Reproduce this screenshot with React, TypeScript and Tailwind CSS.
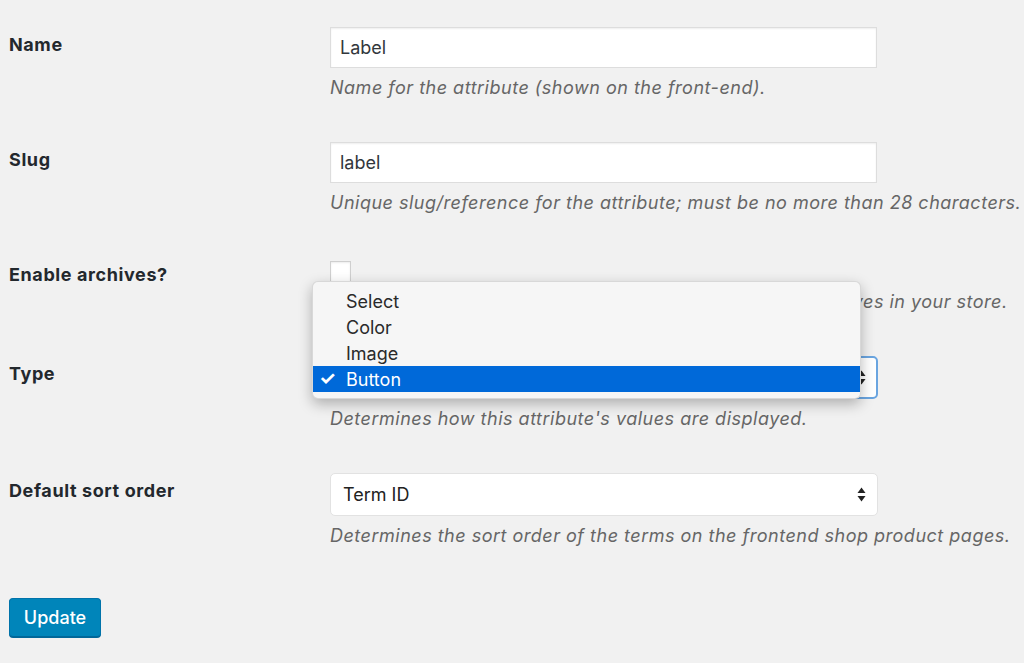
import type { ReactNode } from 'react'

const font = { fontFamily: 'Inter, "Liberation Sans", Arial, sans-serif' }

function Arrows() {
  return (
    <svg width="9" height="15" viewBox="0 0 9 15" className="shrink-0">
      <path d="M4.5 0.5 L8.5 6 L0.5 6 Z" fill="#222" />
      <path d="M4.5 14.5 L8.5 9 L0.5 9 Z" fill="#222" />
    </svg>
  )
}

type RowProps = {
  label: string
  description: string
  children: ReactNode
}

function Row({ label, description, children }: RowProps) {
  return (
    <div className="flex pt-[21px] pb-[20px]">
      <div className="w-[321px] shrink-0 pt-[5px] text-[18px] font-bold leading-[26px] tracking-[0.6px] text-[#23282d]">
        {label}
      </div>
      <div className="relative flex-1">
        {children}
        <p className="mt-[7px] whitespace-nowrap text-[18px] italic leading-[26px] tracking-[0.5px] text-[#666]">
          {description}
        </p>
      </div>
    </div>
  )
}

function TextInput({ value }: { value: string }) {
  return (
    <div className="flex h-[41px] w-[547px] items-center border border-[#ddd] bg-white pl-[9px] text-[18px] text-[#32373c] shadow-[inset_0_1px_2px_rgba(0,0,0,0.07)]">
      {value}
    </div>
  )
}

function Select({ value, focused }: { value: string; focused?: boolean }) {
  return (
    <div
      className={
        focused
          ? 'flex h-[43px] w-[548px] items-center justify-between rounded-[5px] border-2 border-[#6aa5e0] bg-white pl-[11px] pr-[10px] text-[18px] text-[#222]'
          : 'flex h-[43px] w-[548px] items-center justify-between rounded-[5px] border border-[#e2e2e2] bg-white pl-[12px] pr-[11px] text-[18px] text-[#222]'
      }
    >
      <span>{value}</span>
      <Arrows />
    </div>
  )
}

const options = ['Select', 'Color', 'Image', 'Button']

export default function App() {
  return (
    <div className="min-h-[663px] w-full overflow-hidden bg-[#f1f1f1] pl-[9px] pt-[6px]" style={font}>
      <Row label="Name" description="Name for the attribute (shown on the front-end).">
        <TextInput value="Label" />
      </Row>
      <Row label="Slug" description="Unique slug/reference for the attribute; must be no more than 28 characters.">
        <TextInput value="label" />
      </Row>
      <Row label="Enable archives?" description="Enable this if you want this attribute to have product archives in your store.">
        <div className="mt-[4px] h-[21px] w-[21px] border border-[#cfcfcf] bg-white shadow-[inset_0_1px_2px_rgba(0,0,0,0.08)]" />
      </Row>
      <Row label="Type" description="Determines how this attribute's values are displayed.">
        <Select value="Button" focused />
        <div className="absolute left-[-18px] top-[-75px] z-10 w-[549px] rounded-[6px] border border-[rgba(0,0,0,0.12)] bg-[#f6f6f6] pb-[6px] pt-[6px] shadow-[0_5px_14px_rgba(0,0,0,0.28)]">
          {options.map((opt) => (
            <div
              key={opt}
              className={
                opt === 'Button'
                  ? 'flex h-[26px] items-center bg-[#0069d9] text-[18px] text-white'
                  : 'flex h-[26px] items-center text-[18px] text-[#2a2a2a]'
              }
            >
              <span className="w-[33px] pl-[6px] text-[19px] font-bold">{opt === 'Button' ? '✓' : ''}</span>
              <span>{opt}</span>
            </div>
          ))}
        </div>
      </Row>
      <Row label="Default sort order" description="Determines the sort order of the terms on the frontend shop product pages.">
        <Select value="Term ID" />
      </Row>
      <div className="pt-[29px]">
        <button className="h-[39px] w-[92px] rounded-[4px] border border-[#0073aa] border-b-[#006799] bg-[#0085ba] text-[18px] font-medium text-white shadow-[0_1px_0_#006799]">
          Update
        </button>
      </div>
    </div>
  )
}
